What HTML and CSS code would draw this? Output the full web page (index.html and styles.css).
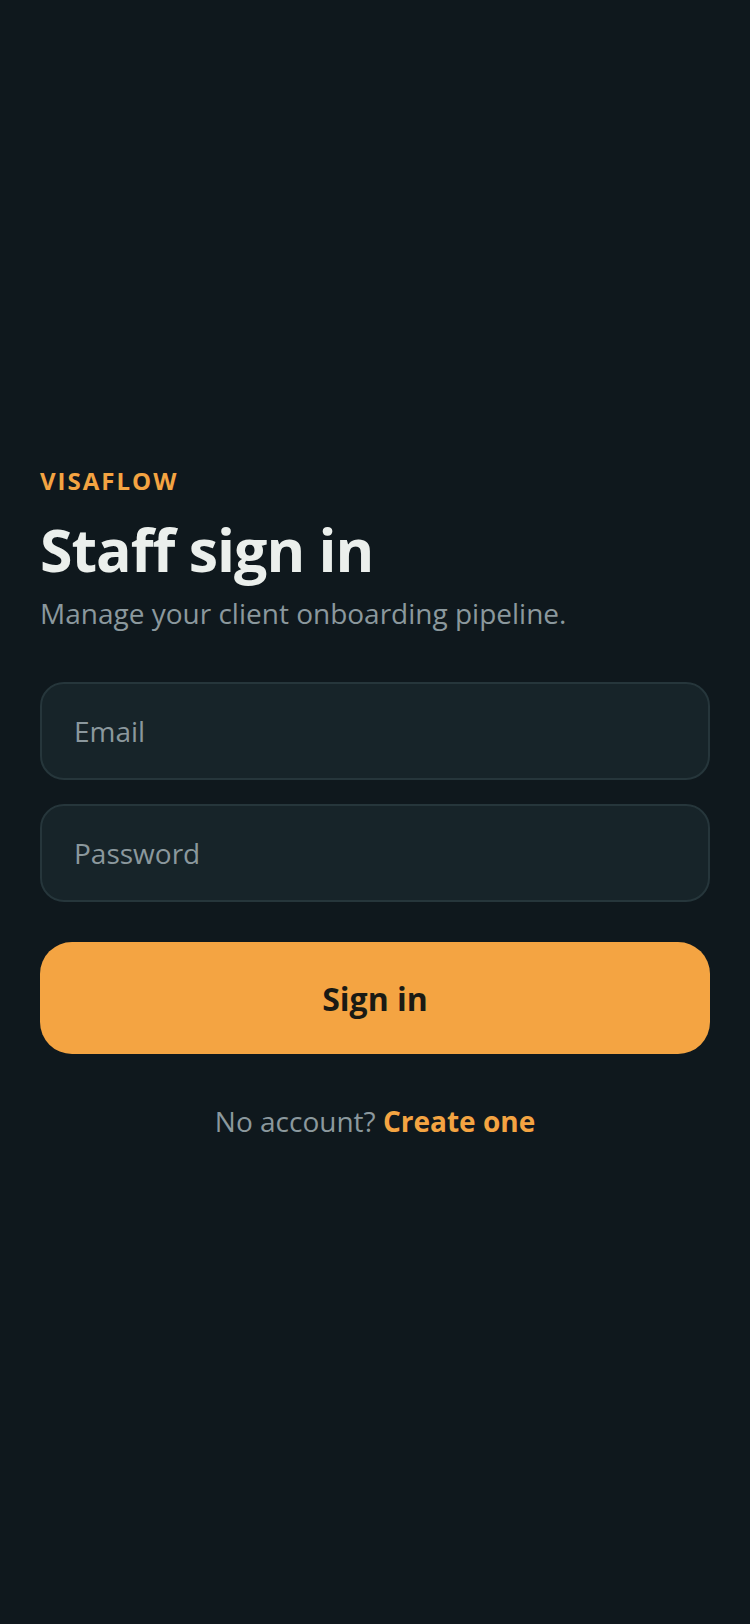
FILE: index.html
```html
<!DOCTYPE html>
<html lang="en">
<head>
    <meta charset="UTF-8">
    <meta name="viewport" content="width=device-width, initial-scale=1.0">
    <title>Staff sign in - VisaFlow</title>
    <link rel="stylesheet" href="styles.css">
</head>
<body>
    <main class="container">
        <p class="brand">VISAFLOW</p>
        <h1>Staff sign in</h1>
        <p class="subtitle">Manage your client onboarding pipeline.</p>
        <form>
            <input type="email" id="email" name="email" placeholder="Email" aria-label="Email" required>
            <input type="password" id="password" name="password" placeholder="Password" aria-label="Password" required>
            <button type="submit">Sign in</button>
        </form>
        <p class="link">
            No account? <a href="register.html">Create one</a>
        </p>
    </main>
</body>
</html>
```
FILE: styles.css
```css
* {
    box-sizing: border-box;
}

body {
    font-family: "Open Sans", sans-serif;
    background-color: #0f181d;
    margin: 0;
    min-height: 100vh;
    display: flex;
    flex-direction: column;
    justify-content: center;
    color: #ebefec;
}

.container {
    padding: 40px 40px 60px;
}

.brand {
    margin: 0 0 12px;
    font-size: 24px;
    line-height: 34px;
    font-weight: 700;
    letter-spacing: 2px;
    color: #f4a442;
}

h1 {
    margin: 0 0 6px;
    font-size: 59px;
    line-height: 78px;
    font-weight: 700;
    letter-spacing: -1px;
}

.subtitle {
    margin: 0;
    font-size: 28px;
    line-height: 38px;
    color: #8b989d;
}

form {
    display: flex;
    flex-direction: column;
    gap: 24px;
    margin-top: 50px;
}

input {
    width: 100%;
    height: 98px;
    padding: 0 32px;
    border: 2px solid #26363b;
    border-radius: 24px;
    background-color: #172429;
    font-family: inherit;
    font-size: 28px;
    color: #ebefec;
}

input::placeholder {
    color: #8b989d;
    opacity: 1;
}

input:focus {
    outline: none;
    border-color: #f4a442;
}

button {
    height: 112px;
    margin-top: 16px;
    border: none;
    border-radius: 32px;
    background-color: #f4a442;
    font-family: inherit;
    font-size: 32px;
    font-weight: 700;
    color: #1a1a14;
    cursor: pointer;
}

.link {
    margin: 48px 0 0;
    font-size: 28px;
    line-height: 38px;
    text-align: center;
    color: #8b989d;
}

.link a {
    font-weight: 700;
    color: #f4a442;
    text-decoration: none;
}
```
